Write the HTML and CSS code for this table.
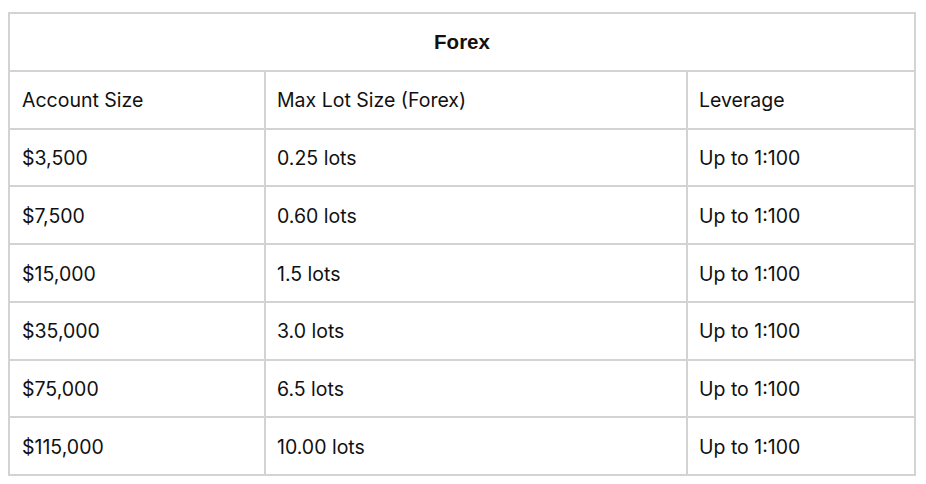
FILE: index.html
```html
<!DOCTYPE html>
<html>
<head>
<meta charset="utf-8">
<link rel="stylesheet" href="styles.css">
</head>
<body>
<table class="grid">
  <colgroup>
    <col class="c1"><col class="c2"><col class="c3">
  </colgroup>
  <thead>
    <tr><th colspan="3" class="title">Forex</th></tr>
  </thead>
  <tbody>
    <tr><td>Account Size</td><td>Max Lot Size (Forex)</td><td>Leverage</td></tr>
    <tr><td>$3,500</td><td>0.25 lots</td><td>Up to 1:100</td></tr>
    <tr><td>$7,500</td><td>0.60 lots</td><td>Up to 1:100</td></tr>
    <tr><td>$15,000</td><td>1.5 lots</td><td>Up to 1:100</td></tr>
    <tr><td>$35,000</td><td>3.0 lots</td><td>Up to 1:100</td></tr>
    <tr><td>$75,000</td><td>6.5 lots</td><td>Up to 1:100</td></tr>
    <tr><td>$115,000</td><td>10.00 lots</td><td>Up to 1:100</td></tr>
  </tbody>
</table>
</body>
</html>
```
FILE: styles.css
```css
html, body {
  margin: 0;
  background: #ffffff;
}
body {
  padding: 12px 0 0 8px;
  font-family: Inter, "Liberation Sans", sans-serif;
  font-size: 19.5px;
  color: #111111;
}
.grid {
  border-collapse: collapse;
  width: 906px;
  table-layout: fixed;
}
.c1 { width: 256px; }
.c2 { width: 422px; }
.c3 { width: 228px; }
.grid th, .grid td {
  border: 2px solid #d3d3d3;
  height: 52.75px;
  padding: 3px 0 0 11px;
  text-align: left;
  vertical-align: middle;
  font-weight: 400;
  line-height: 1;
}
.grid td:first-child {
  padding-left: 12px;
}
.grid th.title {
  text-align: center;
  font-family: "Liberation Sans", Arial, sans-serif;
  font-size: 20.5px;
  font-weight: 700;
  padding: 1px 0 0 0;
  height: 54.75px;
}
```
